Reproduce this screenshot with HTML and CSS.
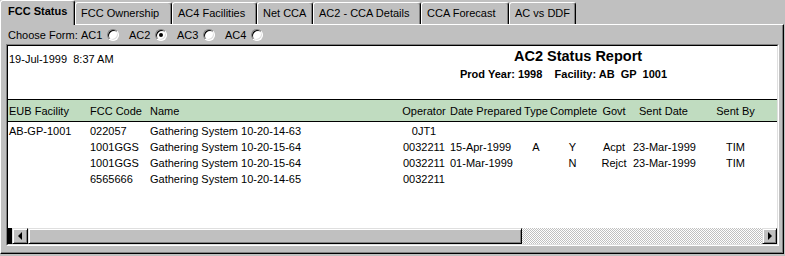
FILE: index.html
```html
<!DOCTYPE html>
<html>
<head>
<meta charset="utf-8">
<link rel="stylesheet" href="styles.css">
</head>
<body>
<div class="app">
  <div class="tabs">
    <div class="tab active w1">FCC Status</div>
    <div class="tab w2">FCC Ownership</div>
    <div class="tab w3">AC4 Facilities</div>
    <div class="tab w4">Net CCA</div>
    <div class="tab w5">AC2 - CCA Details</div>
    <div class="tab w6">CCA Forecast</div>
    <div class="tab w7">AC vs DDF</div>
  </div>
  <div class="panel">
    <div class="chooser">
      <span class="choose-label">Choose Form:</span>
      <span class="opt"><span class="opt-label">AC1</span><span class="radio"></span></span>
      <span class="opt"><span class="opt-label">AC2</span><span class="radio on"></span></span>
      <span class="opt"><span class="opt-label">AC3</span><span class="radio"></span></span>
      <span class="opt"><span class="opt-label">AC4</span><span class="radio"></span></span>
    </div>
    <div class="report">
      <div class="report-inner">
        <div class="report-body">
          <div class="report-top">
            <div class="stamp">19-Jul-1999  8:37 AM</div>
            <div class="titles">
              <div class="title">AC2 Status Report</div>
              <div class="subtitle">Prod Year: 1998    Facility: AB  GP  1001</div>
            </div>
          </div>
          <div class="grid head">
            <div class="c first">EUB Facility</div>
            <div class="c">FCC Code</div>
            <div class="c">Name</div>
            <div class="c ctr">Operator</div>
            <div class="c">Date Prepared</div>
            <div class="c ctr">Type</div>
            <div class="c ctr">Complete</div>
            <div class="c ctr">Govt</div>
            <div class="c ctr">Sent Date</div>
            <div class="c ctr">Sent By</div>
          </div>
          <div class="rows">
            <div class="grid row">
              <div class="c first">AB-GP-1001</div>
              <div class="c">022057</div>
              <div class="c">Gathering System 10-20-14-63</div>
              <div class="c ctr">0JT1</div>
              <div class="c"></div>
              <div class="c ctr"></div>
              <div class="c ctr"></div>
              <div class="c ctr"></div>
              <div class="c ctr"></div>
              <div class="c ctr"></div>
            </div>
            <div class="grid row">
              <div class="c first"></div>
              <div class="c">1001GGS</div>
              <div class="c">Gathering System 10-20-15-64</div>
              <div class="c ctr">0032211</div>
              <div class="c">15-Apr-1999</div>
              <div class="c ctr">A</div>
              <div class="c ctr">Y</div>
              <div class="c ctr">Acpt</div>
              <div class="c ctr">23-Mar-1999</div>
              <div class="c ctr">TIM</div>
            </div>
            <div class="grid row">
              <div class="c first"></div>
              <div class="c">1001GGS</div>
              <div class="c">Gathering System 10-20-15-64</div>
              <div class="c ctr">0032211</div>
              <div class="c">01-Mar-1999</div>
              <div class="c ctr"></div>
              <div class="c ctr">N</div>
              <div class="c ctr">Rejct</div>
              <div class="c ctr">23-Mar-1999</div>
              <div class="c ctr">TIM</div>
            </div>
            <div class="grid row">
              <div class="c first"></div>
              <div class="c">6565666</div>
              <div class="c">Gathering System 10-20-14-65</div>
              <div class="c ctr">0032211</div>
              <div class="c"></div>
              <div class="c ctr"></div>
              <div class="c ctr"></div>
              <div class="c ctr"></div>
              <div class="c ctr"></div>
              <div class="c ctr"></div>
            </div>
          </div>
        </div>
        <div class="hscroll">
          <div class="sb-corner"></div>
          <div class="sb-btn left"><span class="arr-l"></span></div>
          <div class="sb-thumb"></div>
          <div class="sb-track"></div>
          <div class="sb-btn right"><span class="arr-r"></span></div>
        </div>
      </div>
    </div>
  </div>
</div>
</body>
</html>
```

FILE: styles.css
```css
* { box-sizing: border-box; }
html, body { margin: 0; padding: 0; }
body {
  width: 785px;
  height: 256px;
  background: #c0c0c0;
  font-family: "Liberation Sans", Arial, sans-serif;
  font-size: 11px;
  color: #000;
  overflow: hidden;
}
.app {
  width: 784px;
  height: 254px;
  display: flex;
  flex-direction: column;
}

/* tabs */
.tabs {
  display: flex;
  align-items: flex-end;
  height: 24px;
  flex: none;
}
.tab {
  flex: none;
  height: 22px;
  border: 1px solid;
  border-bottom: none;
  border-color: #fff #000 transparent #fff;
  box-shadow: inset -1px 0 #808080;
  border-radius: 3px 3px 0 0;
  padding: 4px 0 0 5px;
  line-height: 13px;
  white-space: nowrap;
  background: #c0c0c0;
}
.tab.active {
  height: 25px;
  margin-bottom: -1px;
  position: relative;
  z-index: 1;
  font-weight: bold;
  padding-left: 7px;
}
.w1 { width: 75px; }
.w2 { width: 97px; }
.w3 { width: 85px; }
.w4 { width: 56px; }
.w5 { width: 108px; }
.w6 { width: 88px; }
.w7 { width: 67px; }

/* tab page */
.panel {
  flex: 1;
  border: 1px solid;
  border-color: #fff #000 #000 #fff;
  box-shadow: inset -1px -1px #808080;
  display: flex;
  flex-direction: column;
}
.chooser {
  height: 19px;
  flex: none;
  display: flex;
  align-items: center;
  padding: 1px 0 0 7px;
  line-height: 13px;
}
.choose-label { width: 73px; flex: none; }
.opt { width: 48px; flex: none; display: flex; align-items: center; }
.opt-label { width: 26px; flex: none; }
.radio {
  width: 12px;
  height: 12px;
  flex: none;
  border-radius: 50%;
  background: #fff;
  border: 1px solid;
  border-color: #808080 #fff #fff #808080;
  box-shadow: inset 1px 1px #000, inset -1px -1px #dfdfdf;
  display: flex;
  align-items: center;
  justify-content: center;
}
.radio.on::after {
  content: "";
  width: 4px;
  height: 4px;
  border-radius: 50%;
  background: #000;
}

/* report field */
.report {
  margin-left: 5px;
  width: 773px;
  height: 202px;
  flex: none;
  border: 1px solid;
  border-color: #808080 #fff #fff #808080;
  display: flex;
}
.report-inner {
  flex: 1;
  border: 1px solid;
  border-color: #000 #dfdfdf #dfdfdf #000;
  background: #fff;
  display: flex;
  flex-direction: column;
  min-width: 0;
}
.report-body {
  flex: 1;
  overflow: hidden;
}
.report-top {
  height: 53px;
  display: flex;
}
.stamp {
  width: 452px;
  flex: none;
  padding: 7px 0 0 1px;
  line-height: 13px;
  white-space: pre;
}
.titles {
  display: flex;
  flex-direction: column;
  padding-top: 2px;
}
.title {
  margin-left: 54px;
  font-size: 14.5px;
  font-weight: bold;
  line-height: 17px;
  white-space: nowrap;
}
.subtitle {
  margin-top: 3px;
  font-weight: bold;
  line-height: 13px;
  white-space: pre;
}

.grid {
  display: grid;
  grid-template-columns: 82px 60px 248px 52px 72px 28px 45px 38px 61px 83px;
}
.c { white-space: nowrap; }
.c.first { padding-left: 1px; }
.c.ctr { text-align: center; }
.head {
  height: 23px;
  background: #c0dcc0;
  border-top: 1px solid #000;
  border-bottom: 1px solid #000;
  align-items: center;
  line-height: 13px;
  padding-top: 1px;
}
.rows { padding-top: 1px; }
.row { height: 16px; line-height: 16px; }

/* scrollbar */
.hscroll {
  height: 16px;
  flex: none;
  display: flex;
}
.sb-corner { width: 4px; background: #000; flex: none; }
.sb-btn, .sb-thumb {
  background: #c0c0c0;
  border: 1px solid;
  border-color: #dfdfdf #000 #000 #dfdfdf;
  box-shadow: inset 1px 1px #fff, inset -1px -1px #808080;
  flex: none;
}
.sb-btn {
  width: 16px;
  display: flex;
  align-items: center;
  justify-content: center;
}
.sb-btn.right { width: 15px; }
.sb-thumb { width: 494px; }
.sb-track {
  flex: 1;
  background: repeating-conic-gradient(#fff 0 25%, #c0c0c0 0 50%) 0 0 / 2px 2px;
}
.arr-l {
  width: 0;
  height: 0;
  border-top: 4px solid transparent;
  border-bottom: 4px solid transparent;
  border-right: 4px solid #000;
}
.arr-r {
  width: 0;
  height: 0;
  border-top: 4px solid transparent;
  border-bottom: 4px solid transparent;
  border-left: 4px solid #000;
}
```
